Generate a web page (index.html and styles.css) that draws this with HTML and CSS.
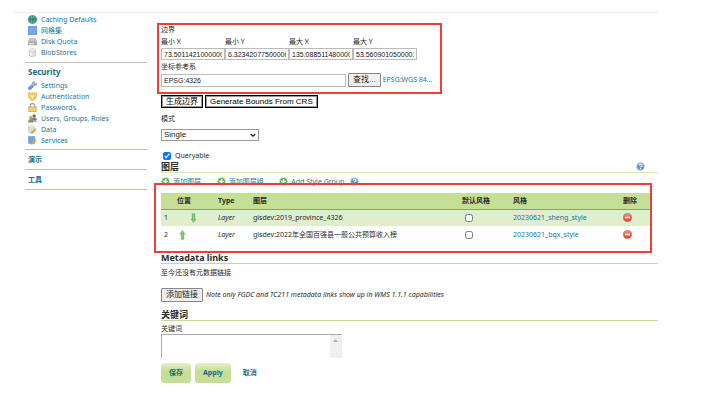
FILE: index.html
```html
<!DOCTYPE html>
<html lang="zh-CN">
<head>
<meta charset="utf-8">
<title>GeoServer</title>
<link rel="stylesheet" href="styles.css">
</head>
<body>
<svg class="defs" aria-hidden="true">
  <defs>
    <linearGradient id="arrow-fill" x1="0" x2="1"><stop offset="0" stop-color="#3f9a48"/><stop offset=".5" stop-color="#8fce84"/><stop offset="1" stop-color="#3f9a48"/></linearGradient>
    <linearGradient id="red-fill" x1="0" x2="0" y1="0" y2="1"><stop offset="0" stop-color="#f3937f"/><stop offset="1" stop-color="#d93f32"/></linearGradient>
    <symbol id="add" viewBox="0 0 16 16"><circle cx="8" cy="8" r="7.5" fill="#a5d39b"/><circle cx="8" cy="8" r="6" fill="#5cad57"/><path d="M8 4v8M4 8h8" stroke="#fff" stroke-width="2.6"/></symbol>
    <symbol id="help" viewBox="0 0 16 16"><circle cx="8" cy="8" r="7.5" fill="#b5c8e0"/><circle cx="8" cy="8" r="6" fill="#6a92c6"/><path d="M5.5 6.2c0-3.4 5.2-3.2 5.2-.4 0 1.8-2.6 1.8-2.6 3.6M8 10.8v2" fill="none" stroke="#fff" stroke-width="1.8"/></symbol>
    <symbol id="remove" viewBox="0 0 16 16"><circle cx="8" cy="8" r="7.3" fill="url(#red-fill)" stroke="#cf5144"/><rect x="3.5" y="6.5" width="9" height="3" rx=".6" fill="#fff"/></symbol>
    <symbol id="arrow" viewBox="0 0 8 16"><path d="M2 1h4v8.500h1.700L4 15.400.3 9.500H2z" fill="url(#arrow-fill)" stroke="#5aab5a" stroke-width=".8"/></symbol>
    <symbol id="pencil" viewBox="0 0 10 10"><path d="M1 9l1-3 5-5 2 2-5 5z" fill="#f2b544" stroke="#b98238" stroke-width=".8"/></symbol>
  </defs>
</svg>
<div class="page">
  <nav class="sidebar">
    <ul class="menu">
      <li><a href="#"><svg class="icon" viewBox="0 0 16 16"><circle cx="8" cy="8" r="7.200" fill="#6fc49d" stroke="#258a6b"/><path d="M1 5.500h14M1 10.500h14M8 1v14M5 1.500c-2 4-2 9 0 13M11 1.500c2 4 2 9 0 13" fill="none" stroke="#16745c"/><path d="M0 8h16" stroke="#2d67a8" stroke-width="1.500"/></svg>Caching Defaults</a></li>
      <li><a href="#"><svg class="icon" viewBox="0 0 16 16"><path d="M0 0h16v16H0z" fill="#709be3"/><path d="M0 5.300h16M0 10.600h16M5.300 0v16M10.600 0v16" stroke="#94b7f0"/></svg>网格集</a></li>
      <li><a href="#"><svg class="icon" viewBox="0 0 16 16"><path d="M3 3h10l3 6v5H0V9z" fill="#c9c9c9" stroke="#929292"/><path d="M1 9h14" stroke="#777"/><path d="M2 12h8" stroke="#eee" stroke-width="1.500"/><path d="M12 12h2" stroke="#54a04f" stroke-width="2"/></svg>Disk Quota</a></li>
      <li><a href="#"><svg class="icon" viewBox="0 0 16 16"><path d="M2.500 4v9c0 3 11 3 11 0V4" fill="#e2e2e2" stroke="#b0b0b0"/><ellipse cx="8" cy="4" rx="5.500" ry="2.500" fill="#f5f5f5" stroke="#b0b0b0"/><path d="M5 7v6" stroke="#fff" stroke-width="2"/></svg>BlobStores</a></li>
    </ul>
    <section class="group">
      <h2>Security</h2>
      <ul class="menu">
        <li><a href="#"><svg class="icon" viewBox="0 0 16 16"><path d="M10 1c3-1 2 2 2 3l2 1 2-2c1 4-2 6-5 5l-6 7c-3 2-6-1-4-4l7-6c-1-2 0-3 2-4z" fill="#a7b4cb" stroke="#7d8ca8"/><path d="M7 7l3 3-5 5c-3 2-6-1-4-3z" fill="#6f95df"/></svg>Settings</a></li>
        <li><a href="#"><svg class="icon" viewBox="0 0 16 16"><path d="M8 1l3 1 4-1v5c0 5-3 8-7 9.500C4 14 1 11 1 6V1l4 1z" fill="#f4c957" stroke="#dca73d"/><path d="M5 5l3 5 3-5" stroke="#fff8d8" stroke-width="2" fill="none"/></svg>Authentication</a></li>
        <li><a href="#"><svg class="icon" viewBox="0 0 16 16"><path d="M4 8V4c0-4 8-4 8 0v4" fill="none" stroke="#9a9a94" stroke-width="2"/><rect x="1.500" y="7" width="13" height="8.500" fill="#f4c95e" stroke="#c18d35"/><path d="M3 10h10M3 13h10" stroke="#fae8aa"/></svg>Passwords</a></li>
        <li><a href="#"><svg class="icon" viewBox="0 0 16 16"><path d="M6 11c0-7 10-6 10 0z" fill="#5685cc"/><circle cx="11" cy="3.500" r="3" fill="#9b6544"/><path d="M0 15c0-8 10-8 10 0z" fill="#63a850"/><circle cx="5" cy="6.500" r="3" fill="#d89360"/><path d="M10 11l5 3" stroke="#cf5041" stroke-width="2"/></svg>Users, Groups, Roles</a></li>
        <li><a href="#"><svg class="icon" viewBox="0 0 16 16"><path d="M1 3v9c0 3 10 3 10 0V3" fill="#dedede" stroke="#b5b5b5"/><ellipse cx="6" cy="3" rx="5" ry="2.200" fill="#f4f4f4" stroke="#b5b5b5"/><use href="#pencil" x="5" y="5" width="11" height="11"/></svg>Data</a></li>
        <li><a href="#"><svg class="icon" viewBox="0 0 16 16"><path d="M1 1h11v12H1z" fill="#79a5e5" stroke="#5d83bf"/><use href="#pencil" x="5" y="5" width="11" height="11"/></svg>Services</a></li>
      </ul>
    </section>
    <section class="group"><h2>演示</h2></section>
    <section class="group last"><h2>工具</h2></section>
  </nav>

  <main class="content">
    <form>
      <section class="bounds">
        <div class="mark" aria-hidden="true"></div>
        <p class="caption">边界</p>
        <div class="coords">
          <label>最小 X<input type="text" value="73.5011421000000"></label>
          <label>最小 Y<input type="text" value="6.32342077500006"></label>
          <label>最大 X<input type="text" value="135.088511480000"></label>
          <label>最大 Y<input type="text" value="53.5609010500001"></label>
        </div>
        <label class="caption" for="crs">坐标参考系</label>
        <div class="crs">
          <input id="crs" type="text" value="EPSG:4326">
          <button type="button" class="plain">查找...</button>
          <a href="#">EPSG:WGS 84...</a>
        </div>
      </section>

      <div class="generate">
        <button type="button" class="outlined">生成边界</button>
        <button type="button" class="outlined">Generate Bounds From CRS</button>
      </div>

      <div class="mode">
        <label for="mode">模式</label>
        <div class="select"><select id="mode"><option>Single</option></select><svg viewBox="0 0 8 6" aria-hidden="true"><path d="M1 1l3 3 3-3" fill="none" stroke="#111" stroke-width="1.500"/></svg></div>
      </div>

      <label class="queryable"><input type="checkbox" checked>Queryable</label>

      <section>
        <div class="title"><h3>图层</h3><a href="#" aria-label="Help"><svg class="icon"><use href="#help"/></svg></a></div>
        <div class="tools">
          <a href="#"><svg class="icon"><use href="#add"/></svg>添加图层...</a>
          <a href="#"><svg class="icon"><use href="#add"/></svg>添加图层组...</a>
          <a href="#"><svg class="icon"><use href="#add"/></svg>Add Style Group...<svg class="icon help"><use href="#help"/></svg></a>
        </div>
        <div class="layers">
          <div class="mark" aria-hidden="true"></div>
          <table>
            <colgroup><col class="c-num"><col class="c-pos"><col class="c-type"><col><col class="c-default"><col class="c-style"><col class="c-remove"></colgroup>
            <thead><tr><th></th><th>位置</th><th>Type</th><th>图层</th><th>默认风格</th><th>风格</th><th>删除</th></tr></thead>
            <tbody>
              <tr><td>1</td><td class="down"><a href="#" aria-label="Down"><svg class="arrow"><use href="#arrow"/></svg></a></td><td><em>Layer</em></td><td>gisdev:2019_province_4326</td><td class="tick"><input type="checkbox" aria-label="默认风格"></td><td><a href="#">20230621_sheng_style</a></td><td><a href="#" aria-label="删除"><svg class="icon"><use href="#remove"/></svg></a></td></tr>
              <tr><td>2</td><td class="up"><a href="#" aria-label="Up"><svg class="arrow"><use href="#arrow"/></svg></a></td><td><em>Layer</em></td><td>gisdev:2022年全国百强县一般公共预算收入榜</td><td class="tick"><input type="checkbox" aria-label="默认风格"></td><td><a href="#">20230621_bqx_style</a></td><td><a href="#" aria-label="删除"><svg class="icon"><use href="#remove"/></svg></a></td></tr>
            </tbody>
          </table>
        </div>
      </section>

      <section class="metadata">
        <div class="title strong"><h3>Metadata links</h3></div>
        <p>至今还没有元数据链接</p>
        <div class="add-link"><button type="button" class="plain">添加链接</button><em>Note only FGDC and TC211 metadata links show up in WMS 1.1.1 capabilities</em></div>
      </section>

      <section>
        <div class="title strong"><h3>关键词</h3></div>
        <label class="keyword-label" for="keywords">关键词</label>
        <div class="keywords"><textarea id="keywords"></textarea><span class="track"><svg viewBox="0 0 6 4" aria-hidden="true"><path d="M0 4l3-4 3 4z" fill="#aaa"/></svg></span></div>
      </section>

      <div class="actions">
        <button type="submit">保存</button>
        <button type="button">Apply</button>
        <a href="#">取消</a>
      </div>
    </form>
  </main>
</div>
</body>
</html>
```

FILE: styles.css
```css
* { box-sizing: border-box; }

body {
  margin: 0;
  background: #fff;
  color: #2a2a2a;
  font: 7px/10px "Noto Sans", "Noto Sans CJK SC", sans-serif;
}

h2, h3, p, ul { margin: 0; padding: 0; }
ul { list-style: none; }
a { color: #1b7698; text-decoration: none; }
input, button, select, textarea { margin: 0; font-family: "Liberation Sans", "Noto Sans CJK SC", sans-serif; color: #222; }
svg { display: block; }
.defs { position: absolute; width: 0; height: 0; }
.icon { width: 9px; height: 9px; flex: none; }

.page {
  display: grid;
  grid-template-columns: 122px 1fr;
  gap: 14px;
  margin: 12px 50px 0 14px;
  padding-left: 11px;
  border-top: 1px solid #eee;
}

/* Sidebar */
.menu a { display: flex; align-items: center; gap: 4px; height: 11px; padding-left: 3px; }
.sidebar { padding-top: 1px; }
.group { margin-top: 4px; border-top: 1px solid #b9c2ab; }
.group h2 { padding: 3px 3px; font-size: 8px; line-height: 11px; color: #12698a; }
.group + .group { margin-top: 3px; }
.group + .group h2 { padding: 4px 3px; font-size: 7px; }
.group + .group.last { margin-top: 0; border-bottom: 1px solid #b9c2ab; }

/* Bounds */
.content { min-width: 0; padding-top: 10px; }
.mark { position: absolute; border: 2px solid #f23c3c; pointer-events: none; }
.bounds { position: relative; width: 284px; }
.bounds .mark { inset: 0 3px -7px -4px; }
.caption { display: block; line-height: 13px; }
.coords { display: flex; }
.coords label { width: 64px; line-height: 12px; }
.coords input { display: block; width: 64px; }
.bounds input { height: 12px; padding: 0 2px; border: 1px solid #bbb; font-size: 7px; line-height: 10px; }
.crs { display: flex; align-items: center; gap: 2px; white-space: nowrap; }
.bounds .crs input { width: 185px; height: 13px; }
.plain { height: 14px; padding: 0 4px; border: 1px solid #888; border-radius: 1px; background: #efefef; font-size: 8px; line-height: 12px; white-space: nowrap; }

.generate { display: flex; gap: 2px; margin-top: 8px; }
.outlined { height: 13px; padding: 0 4px; border: 1px solid #000; box-shadow: inset 0 0 0 1px #999; background: #fff; font-size: 8px; line-height: 11px; color: #000; }

.mode { margin-top: 6px; }
.mode label { display: block; line-height: 10px; }
.select { position: relative; width: 98px; margin-top: 5px; }
.select select { display: block; width: 100%; height: 12px; padding: 0 2px; border: 1px solid #999; appearance: none; background: #fff; font-size: 8px; line-height: 10px; }
.select svg { position: absolute; top: 4px; right: 3px; width: 6px; height: 5px; }
.queryable { display: flex; align-items: center; gap: 4px; margin-top: 10px; padding-left: 2px; }
.queryable input, .tick input { width: 8px; height: 8px; }

/* Sections */
.title { display: flex; justify-content: space-between; align-items: center; height: 12px; border-bottom: 1px solid #d8e8b8; }
.title.strong { border-color: #c1dd93; }
.title h3 { font-size: 9px; line-height: 11px; }
.title a { margin-right: 13px; }
.tools { display: flex; gap: 10px; height: 11px; padding-top: 4px; white-space: nowrap; }
.tools a { display: flex; align-items: flex-start; gap: 3px; height: 9px; line-height: 9px; }
.tools .help { margin-left: -3px; }

.layers { position: relative; padding: 9px 8px 9px 0; }
.layers .mark { inset: -1px 6px -1px -7px; }
table { width: 100%; border-collapse: collapse; table-layout: fixed; }
th, td { padding: 0; text-align: left; white-space: nowrap; }
th { height: 16px; background: #c5df96; border-bottom: 1px solid #66ac94; }
td { height: 17px; }
td:first-child { padding-left: 3px; }
tbody tr:first-child { background: #dfeecb; }
.c-num { width: 16px; }
.c-pos { width: 41px; }
.c-type { width: 35px; }
.c-default { width: 51px; }
.c-style { width: 110px; }
.c-remove { width: 27px; }
.arrow { width: 5px; height: 10px; }
.down { padding-left: 14px; }
.up { padding-left: 3px; }
.up .arrow { transform: rotate(180deg); }
.tick { padding-left: 3px; }
.tick input { display: block; }

.metadata p { margin-top: 3px; line-height: 12px; }
.add-link { display: flex; align-items: center; gap: 3px; margin: 9px 0 7px; white-space: nowrap; }

.keyword-label { display: block; margin-top: 3px; line-height: 10px; }
.keywords { display: flex; width: 181px; height: 24px; border: 1px solid #aaa; border-right-color: #eee; border-bottom: 0; }
.keywords textarea { flex: 1; min-width: 0; padding: 1px; border: 0; resize: none; font-size: 7px; }
.track { width: 11px; padding: 4px 3px; background: #f0f0f0; }
.track svg { width: 5px; height: 3px; }

.actions { display: flex; align-items: center; gap: 4px; margin-top: 5px; font-weight: bold; }
.actions button { height: 20px; padding: 0 8px; border: 0; border-radius: 3px; background: linear-gradient(#e4f0cd, #c5df96 40%); font: bold 7px/20px "Noto Sans", "Noto Sans CJK SC", sans-serif; color: #12698a; }
.actions a { padding: 0 8px; }
```
